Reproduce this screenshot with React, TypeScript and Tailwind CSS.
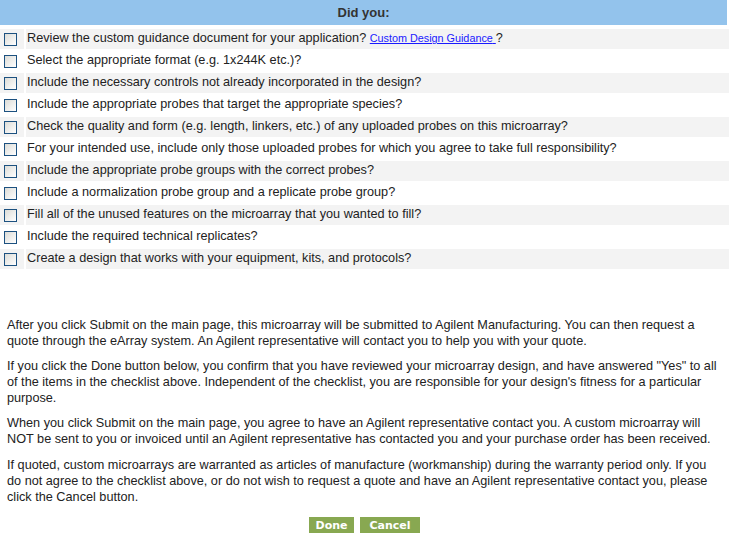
import React from "react";

const items: React.ReactNode[] = [
  <>
    Review the custom guidance document for your application?{" "}
    <a href="#" className="text-[10.8px] text-[#1a1aff] underline">
      Custom Design Guidance{" "}
    </a>{" "}
    ?
  </>,
  "Select the appropriate format (e.g. 1x244K etc.)?",
  "Include the necessary controls not already incorporated in the design?",
  "Include the appropriate probes that target the appropriate species?",
  "Check the quality and form (e.g. length, linkers, etc.) of any uploaded probes on this microarray?",
  "For your intended use, include only those uploaded probes for which you agree to take full responsibility?",
  "Include the appropriate probe groups with the correct probes?",
  "Include a normalization probe group and a replicate probe group?",
  "Fill all of the unused features on the microarray that you wanted to fill?",
  "Include the required technical replicates?",
  "Create a design that works with your equipment, kits, and protocols?",
];

function Box() {
  return (
    <div className="w-[13px] h-[13px] border border-[#1c5180] bg-gradient-to-br from-[#dcdcd7] to-white" />
  );
}

export default function App() {
  return (
    <div
      className="w-[731px] h-[539px] bg-white text-[12.7px] text-[#222] overflow-hidden"
      style={{ fontFamily: '"Liberation Sans", Arial, sans-serif' }}
    >
      <div className="w-[727px] h-[25px] bg-[#93c3ec] flex items-center justify-center font-bold text-[13px] text-[#333]">
        Did you:
      </div>
      <div className="mt-[4px] w-[729px] grid grid-cols-[24px_1fr] gap-x-[2px] gap-y-[2px]">
        {items.map((it, i) => {
          const bg = i % 2 === 0 ? "bg-[#f3f3f3]" : "bg-white";
          return (
            <React.Fragment key={i}>
              <div className={`${bg} h-[20px] flex items-center pl-[4px]`}>
                <Box />
              </div>
              <div className={`${bg} h-[20px] flex items-center pl-[1px] whitespace-nowrap`}>
                <span>{it}</span>
              </div>
            </React.Fragment>
          );
        })}
      </div>
      <div className="mt-[48px] pl-[7px] leading-[16px] whitespace-nowrap">
        <p className="mb-[9px]">
          After you click Submit on the main page, this microarray will be submitted to Agilent Manufacturing. You can then request a
          <br />
          quote through the eArray system. An Agilent representative will contact you to help you with your quote.
        </p>
        <p className="mb-[9px]">
          If you click the Done button below, you confirm that you have reviewed your microarray design, and have answered "Yes" to all
          <br />
          of the items in the checklist above. Independent of the checklist, you are responsible for your design's fitness for a particular
          <br />
          purpose.
        </p>
        <p className="mb-[10px]">
          When you click Submit on the main page, you agree to have an Agilent representative contact you. A custom microarray will
          <br />
          NOT be sent to you or invoiced until an Agilent representative has contacted you and your purchase order has been received.
        </p>
        <p>
          If quoted, custom microarrays are warranted as articles of manufacture (workmanship) during the warranty period only. If you
          <br />
          do not agree to the checklist above, or do not wish to request a quote and have an Agilent representative contact you, please
          <br />
          click the Cancel button.
        </p>
      </div>
      <div
        className="mt-[12px] w-[729px] flex justify-center gap-[6px] text-[11px] font-bold text-white"
        style={{ fontFamily: '"DejaVu Sans", Verdana, sans-serif' }}
      >
        <button className="w-[45px] h-[16px] bg-[#88a851] flex items-center justify-center leading-none">
          Done
        </button>
        <button className="w-[60px] h-[16px] bg-[#88a851] flex items-center justify-center leading-none">
          Cancel
        </button>
      </div>
    </div>
  );
}
